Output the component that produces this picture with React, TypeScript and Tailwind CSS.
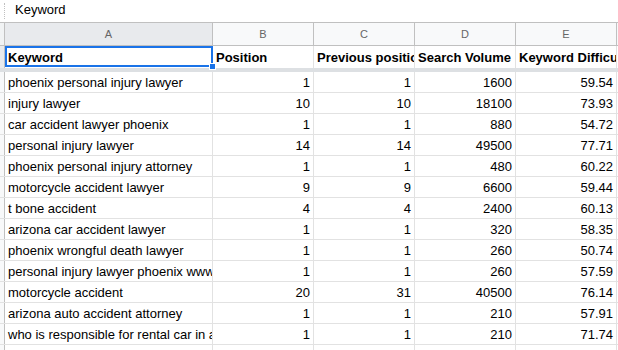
import React from "react";

type Row = [string, number, number, number, string];

const rows: Row[] = [
  ["phoenix personal injury lawyer", 1, 1, 1600, "59.54"],
  ["injury lawyer", 10, 10, 18100, "73.93"],
  ["car accident lawyer phoenix", 1, 1, 880, "54.72"],
  ["personal injury lawyer", 14, 14, 49500, "77.71"],
  ["phoenix personal injury attorney", 1, 1, 480, "60.22"],
  ["motorcycle accident lawyer", 9, 9, 6600, "59.44"],
  ["t bone accident", 4, 4, 2400, "60.13"],
  ["arizona car accident lawyer", 1, 1, 320, "58.35"],
  ["phoenix wrongful death lawyer", 1, 1, 260, "50.74"],
  ["personal injury lawyer phoenix www.phoenix", 1, 1, 260, "57.59"],
  ["motorcycle accident", 20, 31, 40500, "76.14"],
  ["arizona auto accident attorney", 1, 1, 210, "57.91"],
  ["who is responsible for rental car in accident", 1, 1, 210, "71.74"],
];

const cols = ["w-[208px]", "w-[101px]", "w-[101px]", "w-[101px]", "w-[101px]"];

function Cell({
  w,
  right,
  bold,
  children,
}: {
  w: string;
  right?: boolean;
  bold?: boolean;
  children?: React.ReactNode;
}) {
  return (
    <div
      className={`${w} shrink-0 h-full border-r border-[#e2e2e2] px-[3px] pt-[2px] flex items-center overflow-hidden whitespace-nowrap ${
        right ? "justify-end" : ""
      } ${bold ? "font-bold" : ""}`}
    >
      {children}
    </div>
  );
}

export default function App() {
  return (
    <div
      className="w-[618px] h-[350px] overflow-hidden bg-white text-[13px] text-black"
      style={{ fontFamily: '"Liberation Sans", Arial, sans-serif' }}
    >
      {/* formula bar */}
      <div className="h-[22px] flex items-center">
        <div className="w-[5px] h-[16px] border-r border-dotted border-[#c0c0c0]" />
        <span className="ml-[10px] pb-[3px]">Keyword</span>
      </div>

      {/* column letters */}
      <div className="h-[24px] flex border-y border-[#c0c0c0] text-[11px] text-[#666]">
        <div className="w-[5px] shrink-0 bg-[#f1f3f4] border-r border-[#c0c0c0]" />
        {["A", "B", "C", "D", "E", ""].map((l, i) => (
          <div
            key={i}
            className={`${cols[i] ?? "w-[101px]"} shrink-0 flex items-center justify-center border-r border-[#c0c0c0] ${
              i === 0 ? "bg-[#e8eaed]" : "bg-[#f8f9fa]"
            }`}
          >
            {l}
          </div>
        ))}
      </div>

      {/* header row */}
      <div className="relative h-[22px] flex">
        <div className="w-[5px] shrink-0 bg-[#e8eaed] border-r border-[#c0c0c0]" />
        <Cell w={cols[0]} bold>Keyword</Cell>
        <Cell w={cols[1]} bold>Position</Cell>
        <Cell w={cols[2]} bold>Previous position</Cell>
        <Cell w={cols[3]} bold>Search Volume</Cell>
        <Cell w={cols[4]} bold>Keyword Difficulty</Cell>
        <div className="absolute left-[5px] top-0 w-[208px] h-[21px] border-2 border-[#1a73e8]" />
        <div className="absolute left-[209px] top-[17px] w-[7px] h-[7px] bg-[#1a73e8] border border-white z-10" />
      </div>

      {/* frozen divider */}
      <div className="h-[4px] bg-[#dde0e3]" />

      {rows.concat([["", 0, 0, 0, ""] as Row]).map((r, idx) => (
        <div key={idx} className="h-[21px] flex border-b border-[#e2e2e2]">
          <div className="w-[5px] shrink-0 bg-[#f8f9fa] border-r border-[#c0c0c0]" />
          <Cell w={cols[0]}>{r[0]}</Cell>
          <Cell w={cols[1]} right>{r[0] ? r[1] : ""}</Cell>
          <Cell w={cols[2]} right>{r[0] ? r[2] : ""}</Cell>
          <Cell w={cols[3]} right>{r[0] ? r[3] : ""}</Cell>
          <Cell w={cols[4]} right>{r[4]}</Cell>
        </div>
      ))}
    </div>
  );
}
